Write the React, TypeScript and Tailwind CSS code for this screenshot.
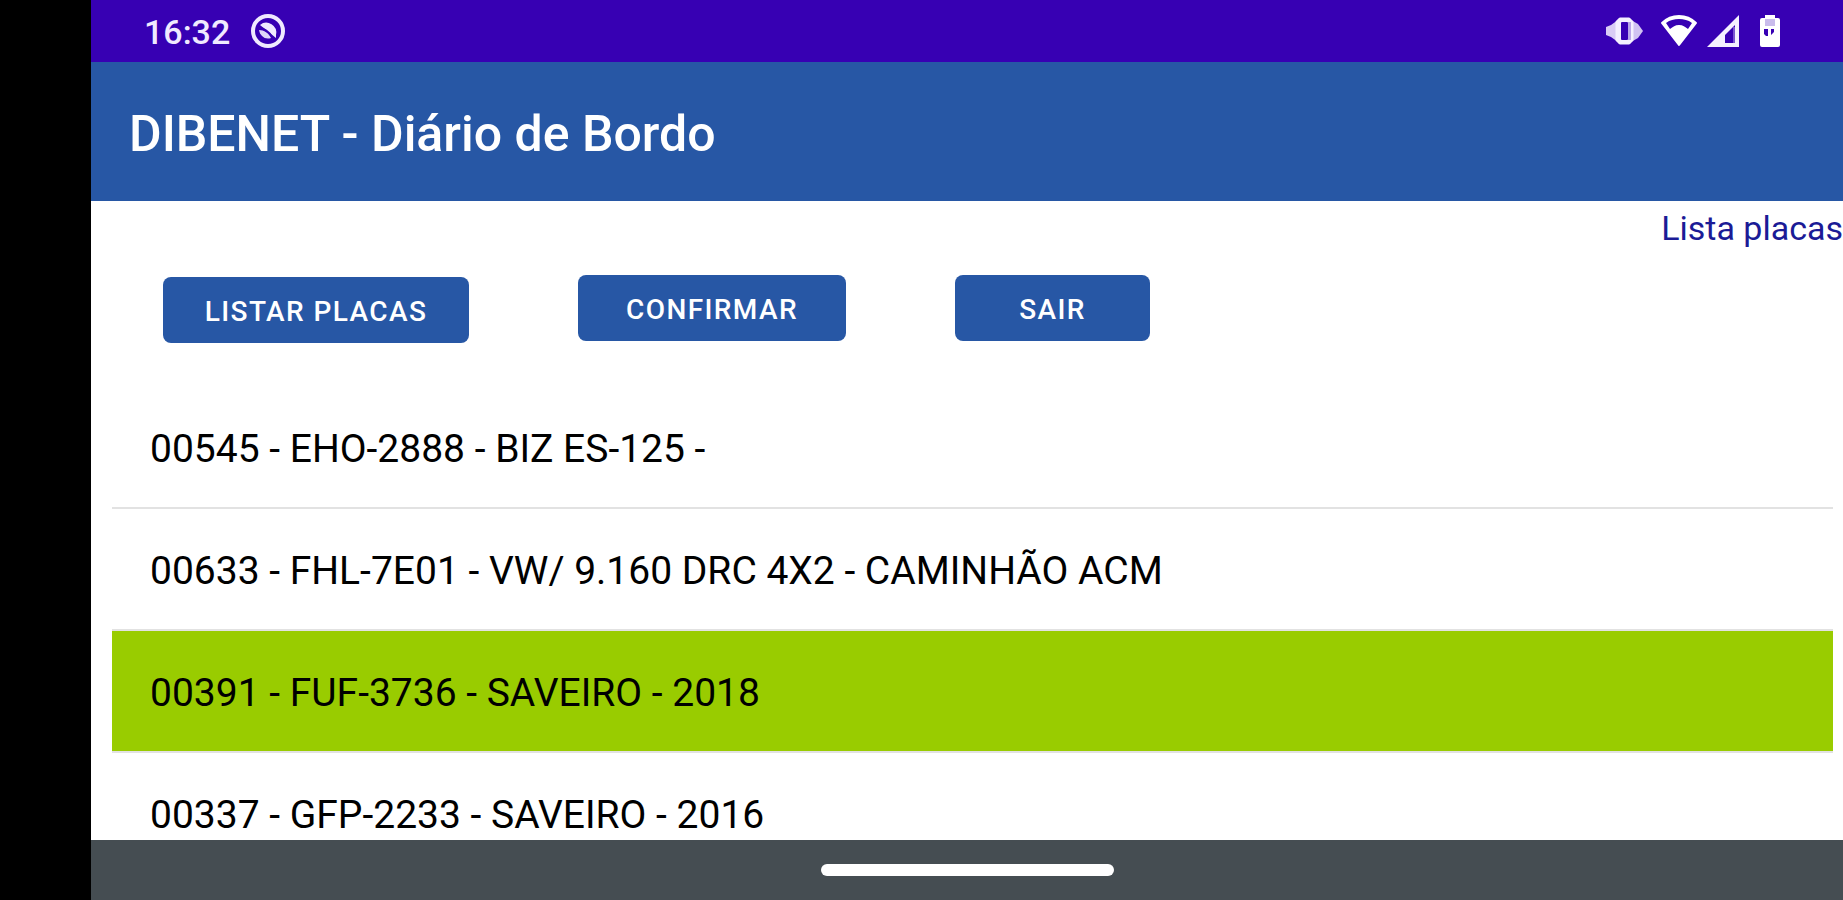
import { useState } from "react";
import { clsx } from "clsx";

type Plate = {
  code: string;
  label: string;
};

const plates: Plate[] = [
  { code: "00545", label: "EHO-2888 - BIZ ES-125 -" },
  { code: "00633", label: "FHL-7E01 - VW/ 9.160 DRC 4X2 - CAMINHÃO ACM" },
  { code: "00391", label: "FUF-3736 - SAVEIRO - 2018" },
  { code: "00337", label: "GFP-2233 - SAVEIRO - 2016" },
];

const NotificationIcon = () => (
  <svg width="36" height="36" viewBox="0 0 36 36" fill="none" aria-hidden="true">
    <circle cx="18" cy="18" r="15" stroke="#f0eaff" strokeWidth="4" />
    <path d="M10 12a10 10 0 0 1 16 10v3z" fill="#f0eaff" />
    <path d="M9 17c5 0 10 3 12 8-6 2-11-2-12-8z" fill="#e0d6fa" />
    <path d="M9 15c6 .5 10 4 13 9" stroke="#3700b3" strokeWidth="2" />
  </svg>
);

const VibrateIcon = () => (
  <svg width="38" height="28" viewBox="0 0 38 28" aria-hidden="true">
    <path d="M0 10l5-2 7-5v22l-7-5-5-2z" fill="#d9ccf5" />
    <path d="M25 3l7 4 5 7-5 7-7 4z" fill="#d0c2f2" />
    <path d="M14 2h9l3 3v18l-3 3h-9l-3-3V5z" stroke="#f4f0ff" strokeWidth="3" strokeLinejoin="round" fill="#f4f0ff" />
    <rect x="15" y="5" width="7" height="18" rx="1" fill="#3700b3" />
    <rect x="22" y="5" width="3" height="18" fill="#b9a6e8" />
  </svg>
);

const WifiIcon = () => (
  <svg width="38" height="34" viewBox="0 0 38 34" aria-hidden="true">
    <path
      d="M2 9C7 4 13 2 19 2s12 2 17 7L19 31z"
      fill="#fff"
      stroke="#fff"
      strokeWidth="2"
      strokeLinejoin="round"
    />
    <path d="M6 9c4-3 8-4 13-4s9 1 13 4l-4 6c-3-2-5-4-9-4s-6 2-9 4z" fill="#3700b3" />
  </svg>
);

const SignalIcon = () => (
  <svg width="34" height="34" viewBox="0 0 34 34" aria-hidden="true">
    <path d="M33 1v32H1z" fill="#f4f0ff" />
    <path d="M29 11v18H19V21z" fill="#3700b3" />
    <path d="M27 13h2v16h-2z" fill="#7a55d0" />
  </svg>
);

const BatteryIcon = () => (
  <svg width="20" height="34" viewBox="0 0 20 34" aria-hidden="true">
    <path d="M5 1h10v3h3a2 2 0 0 1 2 2v25a2 2 0 0 1-2 2H2a2 2 0 0 1-2-2V6a2 2 0 0 1 2-2h3z" fill="#fff" />
    <path d="M5 5h10v7H5z" fill="#c9bcec" />
    <path d="M4 15h4v7H6l-2-2zM11 15h3v3l-3 3z" fill="#3700b3" />
  </svg>
);

const StatusBar = () => (
  <div className="flex h-[62px] shrink-0 items-center justify-between bg-[#3700b3] pr-[63px] pl-[53px]">
    <div className="flex items-center gap-5">
      <span className="pt-0.5 text-[34px] leading-10 font-medium text-[#f0eaff]">16:32</span>
      <NotificationIcon />
    </div>
    <div className="flex items-center">
      <VibrateIcon />
      <div className="ml-4 flex items-center gap-2">
        <WifiIcon />
        <SignalIcon />
      </div>
      <div className="ml-5">
        <BatteryIcon />
      </div>
    </div>
  </div>
);

const actionClass =
  "h-[66px] rounded-lg bg-[#2757a5] pt-1 text-[28px] leading-8 font-medium tracking-wider text-white uppercase";

const App = () => {
  const [selected, setSelected] = useState("00391");

  return (
    <div className="flex h-screen overflow-hidden bg-black pl-[91px] font-['Roboto',sans-serif]">
      <div className="flex min-w-0 flex-1 flex-col bg-white">
        <StatusBar />
        <header className="flex h-[139px] shrink-0 items-center bg-[#2757a5] px-[38px] pt-1">
          <h1 className="text-[50px] leading-[60px] font-medium text-white">DIBENET - Diário de Bordo</h1>
        </header>

        <main className="flex min-h-0 flex-1 flex-col overflow-hidden">
          <p className="h-[50px] shrink-0 pt-1 text-right text-[34px] leading-[46px] text-[#1b1b96]">Lista placas</p>

          <div className="flex shrink-0 items-start gap-[109px] pt-6 pb-11 pl-[72px]">
            <button type="button" className={clsx(actionClass, "mt-0.5 w-[306px]")}>
              Listar placas
            </button>
            <button type="button" className={clsx(actionClass, "w-[268px]")}>
              Confirmar
            </button>
            <button type="button" className={clsx(actionClass, "w-[195px]")}>
              Sair
            </button>
          </div>

          <ul className="mr-[10px] ml-[21px]">
            {plates.map((plate) => (
              <li key={plate.code} className="border-b-2 border-[#e2e2e2]">
                <button
                  type="button"
                  aria-pressed={plate.code === selected}
                  onClick={() => setSelected(plate.code)}
                  className={clsx(
                    "flex h-[120px] w-full items-center px-[38px] pt-1 text-left text-[39px] leading-[48px] text-black",
                    plate.code === selected && "bg-[#99cc00]"
                  )}
                >
                  {plate.code} - {plate.label}
                </button>
              </li>
            ))}
          </ul>
        </main>

        <footer className="flex h-[60px] shrink-0 items-center justify-center bg-[#454d52]">
          <div className="h-3 w-[293px] rounded-full bg-white" />
        </footer>
      </div>
    </div>
  );
};

export default App;
